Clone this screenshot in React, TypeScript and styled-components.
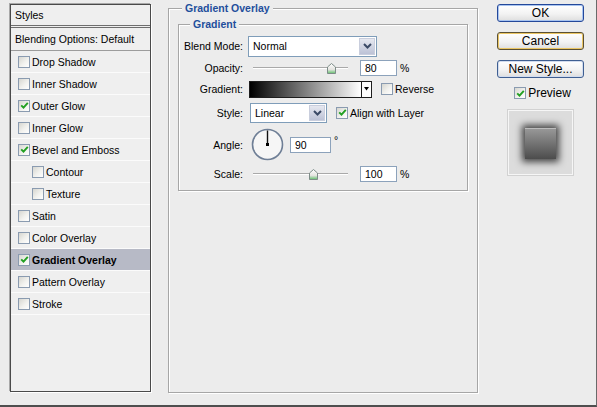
import styled, { createGlobalStyle } from "styled-components";

const GlobalStyle = createGlobalStyle`
    html, body {
        margin: 0;
        padding: 0;
        background: #ececec;
    }
    body {
        font-family: "Liberation Sans", Arial, sans-serif;
        font-size: 10.5px;
        color: #000;
    }
`;

const Dialog = styled.div`
    width: 597px;
    height: 407px;
    box-sizing: border-box;
    display: flex;
    align-items: flex-start;
    background: #ececec;
    border-right: 1px solid #6a6a6a;
    border-bottom: 2px solid #4e4e4e;
`;

/* ---------- left list ---------- */

const StylesPanel = styled.div`
    width: 141px;
    height: 388px;
    margin: 4px 0 0 10px;
    box-sizing: border-box;
    border: 1px solid #4a4a4a;
    box-shadow: -1px -1px 0 #a8a8a8, 1px 1px 0 #ffffff;
    background: #efefef;
    display: flex;
    flex-direction: column;
`;

const PanelHeader = styled.div`
    height: 23px;
    box-sizing: border-box;
    padding-left: 4px;
    display: flex;
    align-items: center;
    border-bottom: 3px double #6e6e6e;
`;

const BlendingRow = styled.div`
    height: 23px;
    box-sizing: border-box;
    padding-left: 4px;
    display: flex;
    align-items: center;
    border-bottom: 1px solid #9c9c9c;
`;

const StyleRow = styled.div<{ $indent?: boolean; $selected?: boolean }>`
    height: 22px;
    box-sizing: border-box;
    display: flex;
    align-items: center;
    gap: 2px;
    padding-left: ${(p) => (p.$indent ? 21 : 7)}px;
    border-bottom: 1px solid #fbfbfb;
    background: ${(p) => (p.$selected ? "#b7bac6" : "transparent")};
    font-weight: ${(p) => (p.$selected ? 700 : 400)};
`;

const CheckBox = styled.span`
    width: 12px;
    height: 12px;
    box-sizing: border-box;
    flex-shrink: 0;
    display: inline-flex;
    align-items: center;
    justify-content: center;
    border: 1px solid #8a9bb0;
    background: linear-gradient(135deg, #d6d6d0 0%, #f1f1ee 55%, #ffffff 100%);
`;

const CheckLabel = styled.label`
    display: flex;
    align-items: center;
    gap: 2px;
`;

function Check({ checked }: { checked?: boolean }) {
    return (
        <CheckBox>
            {checked && (
                <svg width="9" height="9" viewBox="0 0 9 9">
                    <polyline
                        points="1.2,4.3 3.5,6.6 7.8,1.8"
                        fill="none"
                        stroke="#22a022"
                        strokeWidth="1.9"
                    />
                </svg>
            )}
        </CheckBox>
    );
}

/* ---------- group boxes ---------- */

const GroupBox = styled.fieldset<{ $w: number; $h: number }>`
    width: ${(p) => p.$w}px;
    height: ${(p) => p.$h}px;
    box-sizing: border-box;
    margin: 0;
    padding: 0 9px;
    border: 1px solid #a6a6a6;
    box-shadow: inset 1px 1px 0 #ffffff, 1px 1px 0 #ffffff;
    min-width: 0;
`;

const MainGroup = styled(GroupBox)`
    margin: 1px 0 0 17px;
`;

const InnerGroup = styled(GroupBox)`
    margin-top: 2px;
    padding: 4px 0 0 0;
`;

const Legend = styled.legend<{ $offset: number }>`
    margin-left: ${(p) => p.$offset}px;
    padding: 0 3px;
    line-height: 14px;
    font-weight: 700;
    color: #1f4f9c;
    background: #ececec;
`;

const FormGrid = styled.div`
    display: grid;
    grid-template-columns: 64px 1fr;
    grid-template-rows: 22px 21px 22px 25px 39px 20px;
    column-gap: 5px;
    align-items: center;
`;

const FieldLabel = styled.span`
    text-align: right;
`;

const FieldCell = styled.div<{ $shift?: number }>`
    display: flex;
    align-items: center;
    padding-left: ${(p) => p.$shift ?? 0}px;
`;

const Select = styled.div<{ $w: number; $h: number }>`
    width: ${(p) => p.$w}px;
    height: ${(p) => p.$h}px;
    box-sizing: border-box;
    display: flex;
    border: 1px solid #7f9db9;
    background: #ffffff;
`;

const SelectText = styled.span`
    flex: 1;
    display: flex;
    align-items: center;
    padding-left: 4px;
`;

const SelectButton = styled.span`
    width: 16px;
    margin: 1px;
    display: flex;
    align-items: center;
    justify-content: center;
    background: linear-gradient(#e6e8f0, #bcc2d6);
    border: 1px solid #c9cedd;
    box-sizing: border-box;
`;

function Chevron() {
    return (
        <svg width="9" height="6" viewBox="0 0 9 6">
            <polyline
                points="1,1 4.5,4.5 8,1"
                fill="none"
                stroke="#3b4a66"
                strokeWidth="2"
            />
        </svg>
    );
}

const SliderWrap = styled.div`
    position: relative;
    width: 104px;
    height: 14px;
`;

const SliderTrack = styled.div`
    position: absolute;
    left: 5px;
    right: 4px;
    top: 6px;
    height: 1px;
    background: #a9a9a9;
    border-bottom: 1px solid #ffffff;
`;

const SliderThumb = styled.svg`
    position: absolute;
    top: 2px;
    margin-left: -4px;
`;

function Slider({ value }: { value: number }) {
    return (
        <SliderWrap>
            <SliderTrack />
            <SliderThumb
                width="9"
                height="11"
                viewBox="0 0 9 11"
                style={{ left: 5 + value * 95 }}
            >
                <defs>
                    <linearGradient id="thumbFill" x1="0" y1="0" x2="0" y2="1">
                        <stop offset="0" stopColor="#ffffff" />
                        <stop offset="0.6" stopColor="#e4e4e0" />
                        <stop offset="1" stopColor="#5fbf6a" />
                    </linearGradient>
                </defs>
                <polygon
                    points="0.5,4 4.5,0.5 8.5,4 8.5,10.5 0.5,10.5"
                    fill="url(#thumbFill)"
                    stroke="#7d8c88"
                    strokeWidth="1"
                />
            </SliderThumb>
        </SliderWrap>
    );
}

const NumberBox = styled.div<{ $w: number; $ml: number }>`
    width: ${(p) => p.$w}px;
    height: 16px;
    margin-left: ${(p) => p.$ml}px;
    box-sizing: border-box;
    border: 1px solid #8ca2bb;
    background: #ffffff;
    padding-left: 4px;
    display: flex;
    align-items: center;
`;

const Unit = styled.span<{ $up?: boolean }>`
    margin-left: 3px;
    align-self: ${(p) => (p.$up ? "flex-start" : "center")};
    margin-top: ${(p) => (p.$up ? 6 : 0)}px;
`;

const GradientBar = styled.div`
    width: 123px;
    height: 17px;
    margin-left: 1px;
    box-sizing: border-box;
    display: flex;
    border: 1px solid #1e1e1e;
`;

const GradientFill = styled.div`
    flex: 1;
    background: linear-gradient(to right, #000000, #ffffff);
`;

const GradientArrow = styled.div`
    width: 9px;
    display: flex;
    align-items: center;
    justify-content: center;
    background: #ffffff;
    border-left: 1px solid #1e1e1e;
`;

const Spacer = styled.span<{ $w: number }>`
    width: ${(p) => p.$w}px;
    flex-shrink: 0;
`;

/* ---------- right column ---------- */

const ButtonColumn = styled.div`
    width: 87px;
    margin: 4px 0 0 19px;
    display: flex;
    flex-direction: column;
    align-items: center;
    font-size: 12px;
`;

const DialogButton = styled.button<{ $edge: string; $glow: string }>`
    width: 87px;
    height: 18px;
    margin-bottom: 10px;
    padding: 0;
    font-family: "Liberation Sans", Arial, sans-serif;
    font-size: 12px;
    color: #000;
    border: 1px solid ${(p) => p.$edge};
    border-radius: 3px;
    background: linear-gradient(#ffffff, #f3f3f3 55%, #dedede);
    box-shadow: inset 0 0 0 1px ${(p) => p.$glow};
`;

const PreviewCheck = styled(CheckLabel)`
    margin-top: -2px;
    margin-left: 4px;
    gap: 2px;
    font-size: 12px;
`;

const PreviewBox = styled.div`
    width: 65px;
    height: 65px;
    margin-top: 10px;
    box-sizing: border-box;
    display: flex;
    align-items: center;
    justify-content: center;
    background: #dcdcdc;
    border: 1px solid #f6f6f6;
    outline: 1px solid #d2d2d2;
`;

const PreviewSwatch = styled.div`
    width: 31px;
    height: 31px;
    margin-top: 2px;
    background: linear-gradient(#9a9a9a, #4c4c4c);
    box-shadow: 0 0 7px 3px rgba(0, 0, 0, 0.7),
        inset 0 1px 0 rgba(255, 255, 255, 0.35);
`;

const styleItems = [
    { name: "Drop Shadow", checked: false },
    { name: "Inner Shadow", checked: false },
    { name: "Outer Glow", checked: true },
    { name: "Inner Glow", checked: false },
    { name: "Bevel and Emboss", checked: true },
    { name: "Contour", checked: false, indent: true },
    { name: "Texture", checked: false, indent: true },
    { name: "Satin", checked: false },
    { name: "Color Overlay", checked: false },
    { name: "Gradient Overlay", checked: true, selected: true },
    { name: "Pattern Overlay", checked: false },
    { name: "Stroke", checked: false },
];

export default function App() {
    return (
        <>
            <GlobalStyle />
            <Dialog>
                <StylesPanel>
                    <PanelHeader>Styles</PanelHeader>
                    <BlendingRow>Blending Options: Default</BlendingRow>
                    {styleItems.map((item) => (
                        <StyleRow
                            key={item.name}
                            $indent={item.indent}
                            $selected={item.selected}
                        >
                            <Check checked={item.checked} />
                            {item.name}
                        </StyleRow>
                    ))}
                </StylesPanel>

                <MainGroup $w={310} $h={392}>
                    <Legend $offset={4}>Gradient Overlay</Legend>
                    <InnerGroup $w={290} $h={174}>
                        <Legend $offset={11}>Gradient</Legend>
                        <FormGrid>
                            <FieldLabel>Blend Mode:</FieldLabel>
                            <FieldCell>
                                <Select $w={129} $h={21}>
                                    <SelectText>Normal</SelectText>
                                    <SelectButton>
                                        <Chevron />
                                    </SelectButton>
                                </Select>
                            </FieldCell>

                            <FieldLabel>Opacity:</FieldLabel>
                            <FieldCell>
                                <Slider value={0.82} />
                                <NumberBox $w={37} $ml={8}>
                                    80
                                </NumberBox>
                                <Unit>%</Unit>
                            </FieldCell>

                            <FieldLabel>Gradient:</FieldLabel>
                            <FieldCell>
                                <GradientBar>
                                    <GradientFill />
                                    <GradientArrow>
                                        <svg width="5" height="4" viewBox="0 0 5 4">
                                            <polygon points="0,0 5,0 2.5,3.5" fill="#000" />
                                        </svg>
                                    </GradientArrow>
                                </GradientBar>
                                <Spacer $w={9} />
                                <CheckLabel>
                                    <Check />
                                    Reverse
                                </CheckLabel>
                            </FieldCell>

                            <FieldLabel>Style:</FieldLabel>
                            <FieldCell $shift={2}>
                                <Select $w={77} $h={20}>
                                    <SelectText>Linear</SelectText>
                                    <SelectButton>
                                        <Chevron />
                                    </SelectButton>
                                </Select>
                                <Spacer $w={9} />
                                <CheckLabel>
                                    <Check checked />
                                    Align with Layer
                                </CheckLabel>
                            </FieldCell>

                            <FieldLabel>Angle:</FieldLabel>
                            <FieldCell $shift={3}>
                                <svg width="33" height="33" viewBox="0 0 33 33">
                                    <circle
                                        cx="16.5"
                                        cy="16.5"
                                        r="15"
                                        fill="#f6f6f6"
                                        stroke="#6f7f96"
                                        strokeWidth="1.6"
                                    />
                                    <line
                                        x1="16.5"
                                        y1="16.5"
                                        x2="16.5"
                                        y2="2.5"
                                        stroke="#111"
                                        strokeWidth="1.4"
                                    />
                                    <rect x="15" y="15" width="3" height="3" fill="#000" />
                                </svg>
                                <NumberBox $w={41} $ml={6}>
                                    90
                                </NumberBox>
                                <Unit $up>°</Unit>
                            </FieldCell>

                            <FieldLabel>Scale:</FieldLabel>
                            <FieldCell>
                                <Slider value={0.63} />
                                <NumberBox $w={37} $ml={8}>
                                    100
                                </NumberBox>
                                <Unit>%</Unit>
                            </FieldCell>
                        </FormGrid>
                    </InnerGroup>
                </MainGroup>

                <ButtonColumn>
                    <DialogButton $edge="#24489a" $glow="#a8c4f0">
                        OK
                    </DialogButton>
                    <DialogButton $edge="#5a5034" $glow="#ebc664">
                        Cancel
                    </DialogButton>
                    <DialogButton $edge="#3f5f92" $glow="#d2dcee">
                        New Style...
                    </DialogButton>
                    <PreviewCheck>
                        <Check checked />
                        Preview
                    </PreviewCheck>
                    <PreviewBox>
                        <PreviewSwatch />
                    </PreviewBox>
                </ButtonColumn>
            </Dialog>
        </>
    );
}
